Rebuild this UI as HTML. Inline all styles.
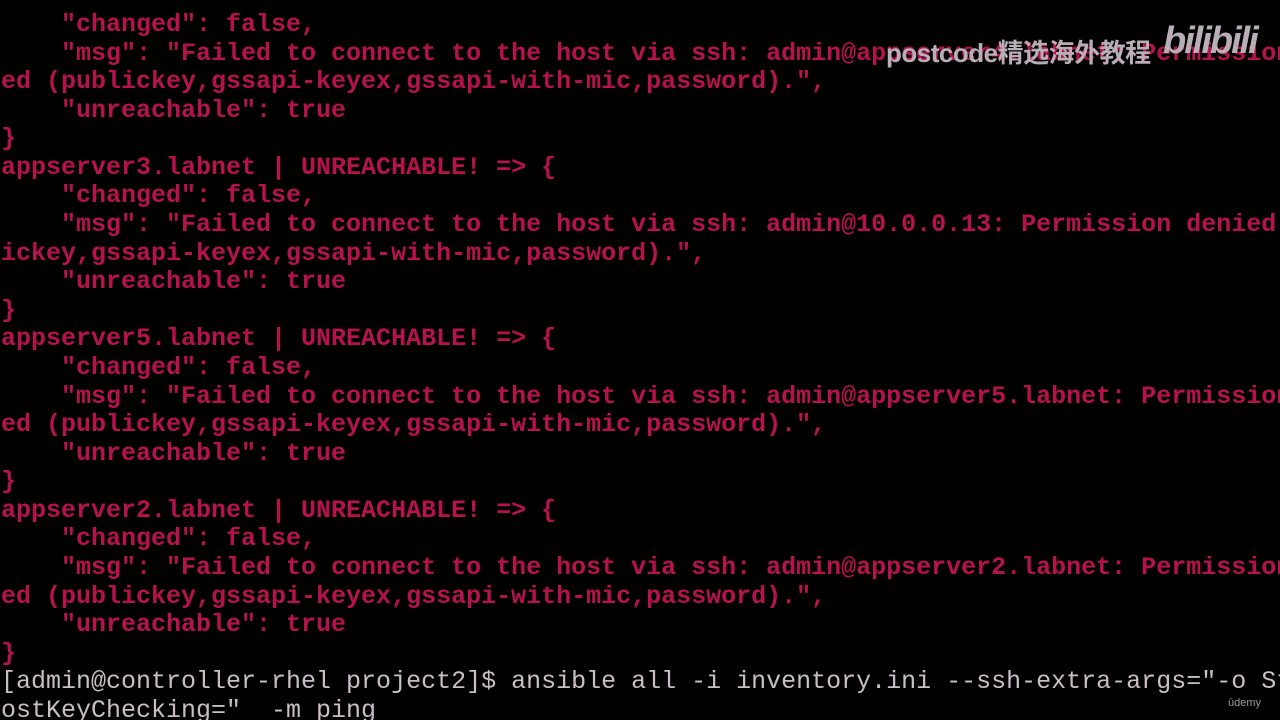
<!DOCTYPE html>
<html><head><meta charset="utf-8"><style>
html,body{margin:0;padding:0;background:#000;width:1280px;height:720px;overflow:hidden}
.c{position:absolute;left:0;top:0;width:1280px;height:720px;overflow:hidden}
pre{margin:0;position:absolute;left:1px;top:11px;font-family:"Liberation Mono",monospace;font-size:25px;line-height:28.58px;color:#b5124e;white-space:pre;font-weight:bold}
.w{color:#c9bec6;font-weight:normal}
.wm{position:absolute;left:886px;top:33px;font-family:"Liberation Sans","Noto Sans CJK SC",sans-serif;font-size:26px;font-weight:bold;color:#b9aeb8;letter-spacing:-0.5px}
.bl{position:absolute;left:1163px;top:20px;font-family:"Liberation Sans",sans-serif;font-size:38px;font-weight:bold;color:#b9aeb8;font-style:italic;letter-spacing:-2px}
.ud{position:absolute;left:1228px;top:697px;font-family:"Liberation Sans",sans-serif;font-size:11px;color:#9a9a9a}
</style></head><body><div class="c">
<pre>    "changed": false,
    "msg": "Failed to connect to the host via ssh: admin@appserver4.labnet: Permission deni
ed (publickey,gssapi-keyex,gssapi-with-mic,password).",
    "unreachable": true
}
appserver3.labnet | UNREACHABLE! => {
    "changed": false,
    "msg": "Failed to connect to the host via ssh: admin@10.0.0.13: Permission denied (publ
ickey,gssapi-keyex,gssapi-with-mic,password).",
    "unreachable": true
}
appserver5.labnet | UNREACHABLE! => {
    "changed": false,
    "msg": "Failed to connect to the host via ssh: admin@appserver5.labnet: Permission deni
ed (publickey,gssapi-keyex,gssapi-with-mic,password).",
    "unreachable": true
}
appserver2.labnet | UNREACHABLE! => {
    "changed": false,
    "msg": "Failed to connect to the host via ssh: admin@appserver2.labnet: Permission deni
ed (publickey,gssapi-keyex,gssapi-with-mic,password).",
    "unreachable": true
}
<span class="w">[admin@controller-rhel project2]$ ansible all -i inventory.ini --ssh-extra-args="-o StrictH
ostKeyChecking="  -m ping</span></pre>
<div class="wm">postcode精选海外教程</div>
<div class="bl">bilibili</div>
<div class="ud">ūdemy</div>
</div></body></html>
